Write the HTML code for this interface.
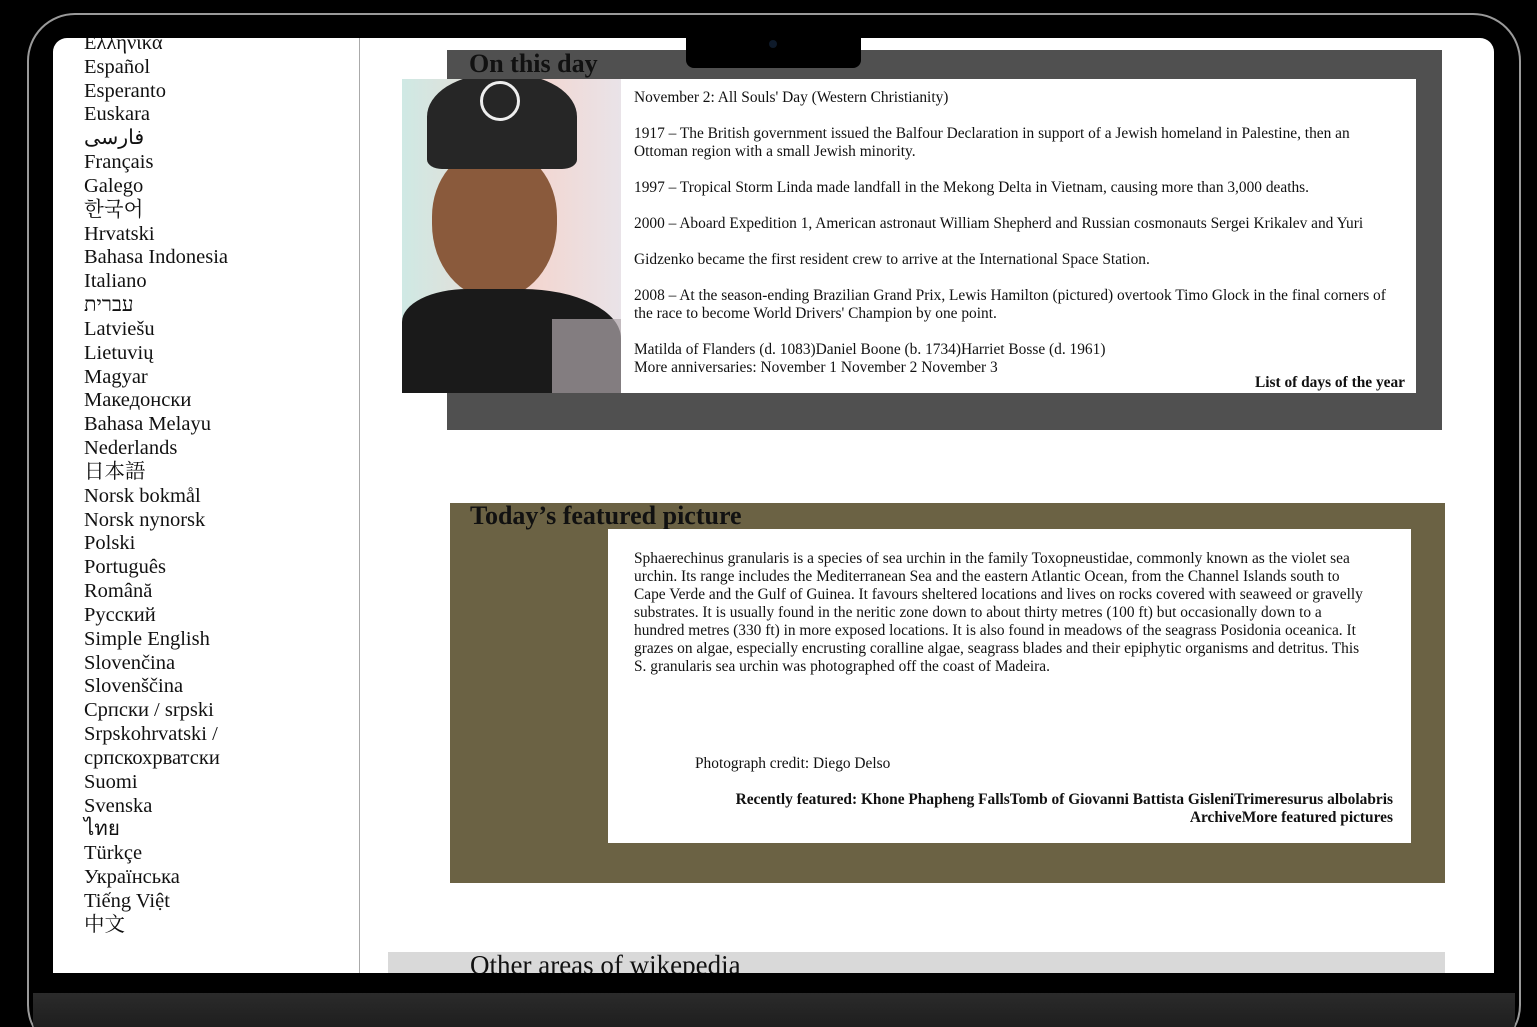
<!DOCTYPE html>
<html><head><meta charset="utf-8"><style>
*{margin:0;padding:0;box-sizing:border-box}
html,body{width:1537px;height:1027px;background:#000;overflow:hidden;position:relative;font-family:"Liberation Serif","Noto Serif CJK SC",serif;color:#111}
.frame{position:absolute;left:27px;top:13px;width:1494px;height:1040px;border:2px solid #9a9a9a;border-radius:48px;background:#000}
.screen{position:absolute;left:53px;top:38px;width:1441px;height:935px;background:#fff;border-radius:14px 14px 0 0;overflow:hidden}
.base{position:absolute;left:33px;top:993px;width:1482px;height:40px;background:linear-gradient(#2b2b2b,#1c1c1c);border-radius:0 0 10px 10px}
.notch{position:absolute;left:686px;top:38px;width:175px;height:30px;background:#000;border-radius:0 0 8px 8px}
.cam{position:absolute;left:769px;top:40px;width:8px;height:8px;border-radius:50%;background:#0e1a2a}
.side{position:absolute;left:0;top:0;width:307px;height:935px;border-right:1px solid #aaa}
.langs{position:absolute;left:31px;top:-6px;font-size:20.5px;line-height:23.83px;white-space:nowrap}
.p{position:absolute}
h2{font-size:26px;font-weight:bold;position:absolute;line-height:1}
.t{font-size:15.4px;line-height:18px;position:absolute}
</style></head><body>
<div class="frame"></div>
<div class="base"></div>
<div class="screen">
 <div class="side"><div class="langs">
 Ελληνικά<br>Español<br>Esperanto<br>Euskara<br>فارسی<br>Français<br>Galego<br>한국어<br>Hrvatski<br>Bahasa Indonesia<br>Italiano<br>עברית<br>Latviešu<br>Lietuvių<br>Magyar<br>Македонски<br>Bahasa Melayu<br>Nederlands<br>日本語<br>Norsk bokmål<br>Norsk nynorsk<br>Polski<br>Português<br>Română<br>Русский<br>Simple English<br>Slovenčina<br>Slovenščina<br>Српски / srpski<br>Srpskohrvatski /<br>српскохрватски<br>Suomi<br>Svenska<br>ไทย<br>Türkçe<br>Українська<br>Tiếng Việt<br>中文
 </div></div>
 <!-- panel 1 -->
 <div class="p" style="left:394px;top:12px;width:995px;height:380px;background:#505050"></div>
 <h2 style="left:416px;top:13px">On this day</h2>
 <div class="p" style="left:349px;top:41px;width:219px;height:314px;background:linear-gradient(90deg,#cfe9e4,#f3d6d0 60%,#e9e3e8);overflow:hidden">
  <div class="p" style="left:30px;top:70px;width:125px;height:150px;background:#8a5a3c;border-radius:45% 45% 50% 50%"></div>
  <div class="p" style="left:25px;top:-5px;width:150px;height:95px;background:#262626;border-radius:45% 45% 10% 10%"></div>
  <div class="p" style="left:78px;top:2px;width:40px;height:40px;border:3px solid #eee;border-radius:50%"></div>
  <div class="p" style="left:0;top:210px;width:219px;height:110px;background:#1a1a1a;border-radius:30% 45% 0 0"></div>
  <div class="p" style="left:150px;top:240px;width:69px;height:80px;background:#b0a8ad;opacity:.7"></div>
 </div>
 <div class="p" style="left:568px;top:41px;width:795px;height:314px;background:#fff"></div>
 <div class="t" style="left:581px;top:51px;width:770px">November 2: All Souls' Day (Western Christianity)<br><br>1917 – The British government issued the Balfour Declaration in support of a Jewish homeland in Palestine, then an Ottoman region with a small Jewish minority.<br><br>1997 – Tropical Storm Linda made landfall in the Mekong Delta in Vietnam, causing more than 3,000 deaths.<br><br>2000 – Aboard Expedition 1, American astronaut William Shepherd and Russian cosmonauts Sergei Krikalev and Yuri<br><br>Gidzenko became the first resident crew to arrive at the International Space Station.<br><br>2008 – At the season-ending Brazilian Grand Prix, Lewis Hamilton (pictured) overtook Timo Glock in the final corners of the race to become World Drivers' Champion by one point.<br><br>Matilda of Flanders (d. 1083)Daniel Boone (b. 1734)Harriet Bosse (d. 1961)<br>More anniversaries: November 1 November 2 November 3</div>
 <div class="t" style="left:1050px;top:336px;width:302px;text-align:right;font-weight:bold">List of days of the year</div>
 <!-- panel 2 -->
 <div class="p" style="left:397px;top:465px;width:995px;height:380px;background:#6b6244"></div>
 <h2 style="left:417px;top:465px">Today’s featured picture</h2>
 <div class="p" style="left:555px;top:491px;width:803px;height:314px;background:#fff"></div>
 <div class="t" style="left:581px;top:512px;width:738px">Sphaerechinus granularis is a species of sea urchin in the family Toxopneustidae, commonly known as the violet sea urchin. Its range includes the Mediterranean Sea and the eastern Atlantic Ocean, from the Channel Islands south to Cape Verde and the Gulf of Guinea. It favours sheltered locations and lives on rocks covered with seaweed or gravelly substrates. It is usually found in the neritic zone down to about thirty metres (100 ft) but occasionally down to a hundred metres (330 ft) in more exposed locations. It is also found in meadows of the seagrass Posidonia oceanica. It grazes on algae, especially encrusting coralline algae, seagrass blades and their epiphytic organisms and detritus. This S. granularis sea urchin was photographed off the coast of Madeira.</div>
 <div class="t" style="left:642px;top:717px">Photograph credit: Diego Delso</div>
 <div class="t" style="left:620px;top:753px;width:720px;text-align:right;font-weight:bold">Recently featured: Khone Phapheng FallsTomb of Giovanni Battista GisleniTrimeresurus albolabris ArchiveMore featured pictures</div>
 <!-- panel 3 -->
 <div class="p" style="left:335px;top:914px;width:1057px;height:30px;background:#d9d9d9"></div>
 <h2 style="left:417px;top:914px;font-weight:normal;font-size:27px">Other areas of wikepedia</h2>
</div>
<div class="notch"></div>
<div class="cam"></div>
</body></html>
